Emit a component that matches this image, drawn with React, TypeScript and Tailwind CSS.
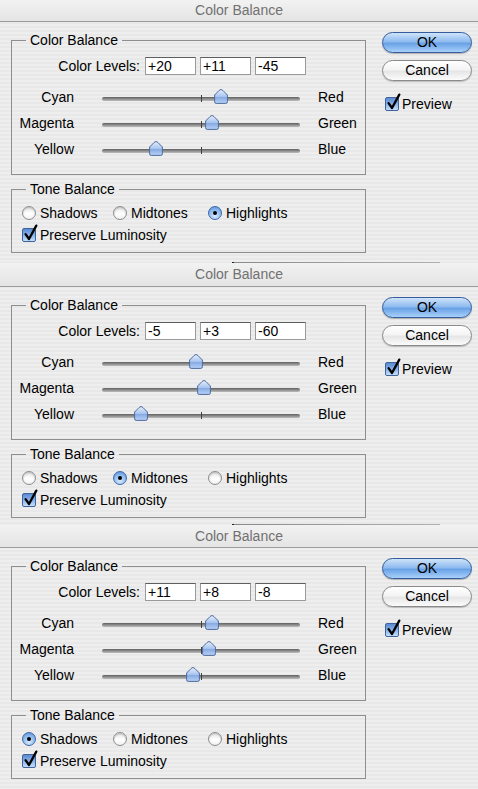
import React from "react";

type Tone = "Shadows" | "Midtones" | "Highlights";

type PanelData = {
  levels: [number, number, number];
  tone: Tone;
  titleH: string;
  bodyH: string;
};

const panels: PanelData[] = [
  { levels: [20, 11, -45], tone: "Highlights", titleH: "h-[22px]", bodyH: "h-[240px]" },
  { levels: [-5, 3, -60], tone: "Midtones", titleH: "h-[24px]", bodyH: "h-[237px]" },
  { levels: [11, 8, -8], tone: "Shadows", titleH: "h-[23px]", bodyH: "h-[241px]" },
];

const sliders = [
  { left: "Cyan", right: "Red" },
  { left: "Magenta", right: "Green" },
  { left: "Yellow", right: "Blue" },
];

const tones: { name: Tone; w: string }[] = [
  { name: "Shadows", w: "w-[91px]" },
  { name: "Midtones", w: "w-[95px]" },
  { name: "Highlights", w: "w-[100px]" },
];

const fmt = (v: number) => (v > 0 ? `+${v}` : `${v}`);

function Thumb({ value }: { value: number }) {
  return (
    <svg
      className="absolute top-[5px]"
      style={{ left: 99 + value - 7 }}
      width="14"
      height="15"
      viewBox="0 0 14 15"
    >
      <defs>
        <linearGradient id="thumbFill" x1="0" y1="0" x2="0" y2="1">
          <stop offset="0" stopColor="#e6eefb" />
          <stop offset="0.5" stopColor="#a9c5ef" />
          <stop offset="0.55" stopColor="#86a9e3" />
          <stop offset="1" stopColor="#b9d2f5" />
        </linearGradient>
      </defs>
      <path
        d="M7 0.6 Q8 0.6 9 1.6 L13.4 6 V12.8 Q13.4 14.4 11.8 14.4 H2.2 Q0.6 14.4 0.6 12.8 V6 L5 1.6 Q6 0.6 7 0.6 Z"
        fill="url(#thumbFill)"
        stroke="#4e6c9e"
        strokeWidth="1"
      />
    </svg>
  );
}

function Radio({ checked }: { checked: boolean }) {
  if (checked) {
    return (
      <span className="flex h-[14px] w-[14px] items-center justify-center rounded-full border border-[#3e68a8] bg-[radial-gradient(circle_at_50%_75%,#d9ebfd_0%,#8db9ee_55%,#4f86d3_100%)]">
        <span className="h-[4px] w-[4px] rounded-full bg-black" />
      </span>
    );
  }
  return (
    <span className="h-[14px] w-[14px] rounded-full border border-[#8d8d8d] bg-[linear-gradient(180deg,#e4e4e4_0%,#ffffff_55%,#f2f2f2_100%)] shadow-[inset_0_1px_2px_rgba(0,0,0,0.2)]" />
  );
}

function CheckBox() {
  return (
    <span className="relative inline-block h-[14px] w-[14px] rounded-[2px] border border-[#3f639b] bg-[linear-gradient(180deg,#5a8ad2_0%,#8db5ea_55%,#c6dffb_100%)]">
      <svg className="absolute left-[1px] top-[-5px]" width="14" height="17" viewBox="0 0 14 17">
        <path d="M1.6 10.2 L5 15 L12.3 1.6" fill="none" stroke="#000" strokeWidth="2.3" strokeLinecap="round" strokeLinejoin="round" />
      </svg>
    </span>
  );
}

function SliderRow({ left, right, value }: { left: string; right: string; value: number }) {
  return (
    <div className="flex h-[26px] items-center">
      <div className="w-[62px] text-right">{left}</div>
      <div className="relative ml-[28px] h-[26px] w-[198px]">
        <div className="mt-[13px] h-[4px] w-full rounded-full bg-[linear-gradient(180deg,#5f5f5f_0%,#8e8e8e_50%,#bdbdbd_100%)]" />
        <div className="absolute left-[99px] top-[11px] h-[7px] w-px bg-[#3f3f3f]" />
        <Thumb value={value} />
      </div>
      <div className="ml-[18px]">{right}</div>
    </div>
  );
}

function Panel({ data }: { data: PanelData }) {
  return (
    <div className="flex flex-col">
      <div
        className={`flex items-center justify-center border-b border-[#9c9c9c] bg-[linear-gradient(180deg,#f2f2f2,#e4e4e4)] text-[#717171] ${data.titleH}`}
      >
        Color Balance
      </div>
      <div className={`flex ${data.bodyH}`}>
        <div className="ml-[11px] flex w-[355px] flex-col">
          <fieldset className="mt-[10px] border border-[#8e8e8e] pb-[12px]">
            <legend className="ml-[14px] px-[4px] leading-[16px]">Color Balance</legend>
            <div className="mt-[9px] flex h-[18px] items-center">
              <div className="w-[128px] text-right">Color Levels:</div>
              <div className="ml-[5px] flex gap-[4px]">
                {data.levels.map((v, i) => (
                  <div
                    key={i}
                    className="h-[18px] w-[51px] border border-[#9a9a9a] border-t-[#5e5e5e] bg-white pl-[2px] leading-[16px]"
                  >
                    {fmt(v)}
                  </div>
                ))}
              </div>
            </div>
            <div className="mt-[9px] flex flex-col">
              {sliders.map((s, i) => (
                <SliderRow key={s.left} left={s.left} right={s.right} value={data.levels[i]} />
              ))}
            </div>
          </fieldset>
          <fieldset className="mt-[6px] border border-[#8e8e8e] pb-[8px]">
            <legend className="ml-[14px] px-[4px] leading-[16px]">Tone Balance</legend>
            <div className="mt-[7px] flex h-[18px] items-center pl-[10px]">
              {tones.map((t) => (
                <div key={t.name} className={`flex items-center gap-[4px] ${t.w}`}>
                  <Radio checked={t.name === data.tone} />
                  <span>{t.name}</span>
                </div>
              ))}
            </div>
            <div className="mt-[4px] flex h-[18px] items-center gap-[4px] pl-[10px]">
              <CheckBox />
              <span>Preserve Luminosity</span>
            </div>
          </fieldset>
        </div>
        <div className="ml-[16px] flex flex-col">
          <button className="mt-[10px] flex h-[21px] w-[90px] items-center justify-center rounded-full border border-[#345c9c] bg-[linear-gradient(180deg,#cfe3fa_0%,#8fbcef_45%,#6aa2e6_55%,#a8d0fa_100%)] shadow-[0_1px_1px_rgba(0,0,0,0.25)]">
            OK
          </button>
          <button className="mt-[7px] flex h-[21px] w-[90px] items-center justify-center rounded-full border border-[#8a8a8a] bg-[linear-gradient(180deg,#ffffff_0%,#f4f4f4_45%,#e6e6e6_55%,#fbfbfb_100%)] shadow-[0_1px_1px_rgba(0,0,0,0.2)]">
            Cancel
          </button>
          <div className="mt-[15px] flex h-[16px] items-center gap-[3px] pl-[3px]">
            <CheckBox />
            <span>Preview</span>
          </div>
        </div>
      </div>
    </div>
  );
}

function Edge() {
  return (
    <div className="flex h-px">
      <div className="ml-[232px] h-px w-[208px] bg-[linear-gradient(90deg,#222_0px,#222_2px,#8a8a8a_2px,#b0b0b0_100%)]" />
    </div>
  );
}

export default function App() {
  return (
    <div className="h-[789px] w-[478px] overflow-hidden bg-[repeating-linear-gradient(180deg,#eeeeee_0px,#eeeeee_2px,#e8e8e8_2px,#e8e8e8_4px)] font-['Liberation_Sans',Arial,sans-serif] text-[14px] text-black">
      <Panel data={panels[0]} />
      <Edge />
      <Panel data={panels[1]} />
      <Edge />
      <Panel data={panels[2]} />
    </div>
  );
}
